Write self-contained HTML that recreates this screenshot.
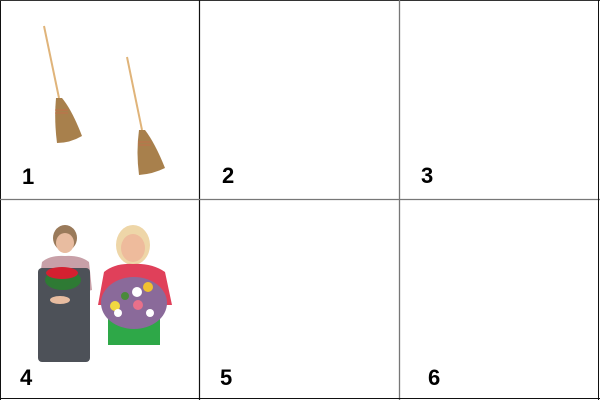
<!DOCTYPE html>
<html><head><style>
html,body{margin:0;padding:0;background:#fff;}
svg{display:block}
text{font-family:"Liberation Sans",Arial,sans-serif;font-weight:bold;font-size:22px;fill:#000}
</style></head><body>
<svg width="600" height="400" viewBox="0 0 600 400">
<rect x="0" y="0" width="600" height="400" fill="#fff"/>
<line x1="0.5" y1="0" x2="0.5" y2="400" stroke="#111" stroke-width="1"/>
<line x1="0" y1="0.5" x2="600" y2="0.5" stroke="#333" stroke-width="1"/>
<line x1="199.5" y1="0" x2="199.5" y2="400" stroke="#111" stroke-width="1.2"/>
<line x1="399.5" y1="0" x2="399.5" y2="400" stroke="#777" stroke-width="1.3"/>
<line x1="0" y1="199.5" x2="600" y2="199.5" stroke="#777" stroke-width="1.3"/>
<line x1="598.5" y1="0" x2="598.5" y2="400" stroke="#111" stroke-width="1"/>
<line x1="0" y1="398.5" x2="600" y2="398.5" stroke="#111" stroke-width="1"/>
<!-- brooms -->
<line x1="44" y1="26" x2="59" y2="98" stroke="#e0b47a" stroke-width="2"/>
<path d="M56 98 L62 98 Q72 110 82 136 Q70 143 57 143 Q54 120 56 98 Z" fill="#a8804c"/>
<path d="M55 110 L68 110 M55 113 L68 113" stroke="#c96a4a" stroke-width="0.8"/>
<line x1="127" y1="57" x2="142" y2="130" stroke="#e0b47a" stroke-width="2"/>
<path d="M139 130 L145 130 Q155 143 165 168 Q153 174 139 175 Q136 152 139 130 Z" fill="#a8804c"/>
<path d="M138 142 L151 142 M138 145 L151 145" stroke="#c96a4a" stroke-width="0.8"/>
<!-- woman 1 -->
<ellipse cx="65" cy="238" rx="12" ry="13" fill="#9a7a5a"/>
<ellipse cx="65" cy="243" rx="9" ry="10" fill="#e8bca0"/>
<path d="M42 262 Q50 255 65 256 Q80 255 89 262 L92 290 L84 292 L82 270 L48 270 L46 292 L38 290 Z" fill="#c8a0a8"/>
<rect x="38" y="268" width="52" height="94" fill="#4d5158" rx="4"/>
<ellipse cx="63" cy="280" rx="18" ry="10" fill="#2e7a34"/>
<ellipse cx="62" cy="273" rx="16" ry="6" fill="#d42030"/>
<ellipse cx="60" cy="300" rx="10" ry="4" fill="#e8bca0"/>
<!-- woman 2 -->
<ellipse cx="133" cy="245" rx="17" ry="20" fill="#eed6a8"/>
<ellipse cx="133" cy="248" rx="12" ry="14" fill="#eebb9c"/>
<path d="M104 272 Q115 263 133 264 Q152 263 165 272 L172 305 L98 305 Z" fill="#e0405a"/>
<rect x="108" y="305" width="52" height="40" fill="#2ea848"/>
<ellipse cx="134" cy="303" rx="33" ry="26" fill="#8a6a9a"/>
<circle cx="115" cy="306" r="5" fill="#f0d840"/>
<circle cx="137" cy="292" r="5" fill="#fff"/>
<circle cx="148" cy="287" r="5" fill="#f0c030"/>
<circle cx="138" cy="305" r="5" fill="#e8708a"/>
<circle cx="118" cy="313" r="4" fill="#fff"/>
<circle cx="150" cy="313" r="4" fill="#fff"/>
<circle cx="125" cy="296" r="4" fill="#4a8a3a"/>
<text x="22" y="184">1</text>
<text x="222" y="183">2</text>
<text x="421" y="183">3</text>
<text x="20" y="385">4</text>
<text x="220" y="385">5</text>
<text x="428" y="385">6</text>
</svg>
</body></html>
